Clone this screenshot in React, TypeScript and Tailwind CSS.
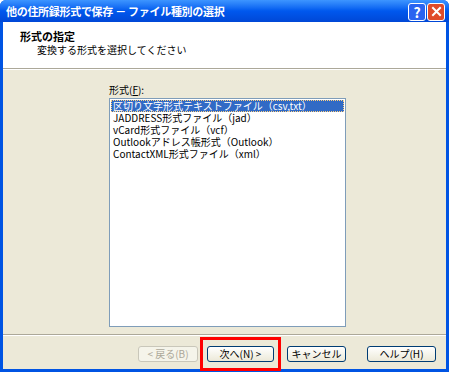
import React from 'react';

const formats = [
  '区切り文字形式テキストファイル（csv,txt）',
  'JADDRESS形式ファイル（jad）',
  'vCard形式ファイル（vcf）',
  'Outlookアドレス帳形式（Outlook）',
  'ContactXML形式ファイル（xml）',
];

const font = { fontFamily: '"MS UI Gothic", "Noto Sans CJK JP", sans-serif' };

function XpButton({ label, disabled }: { label: string; disabled?: boolean }) {
  return (
    <div
      className={`flex items-center justify-center h-[16px] rounded-[3px] border text-[10px] leading-none ${
        disabled
          ? 'border-[#c9c7ba] bg-[#f5f4ea] text-[#aca899]'
          : 'border-[#003c74] bg-gradient-to-b from-white to-[#ece9d8] text-black'
      }`}
    >
      {label}
    </div>
  );
}

export default function App() {
  return (
    <div className="w-[449px] h-[372px] bg-[#0054e3] flex flex-col rounded-t-[6px] overflow-hidden" style={font}>
      {/* Title bar */}
      <div className="h-[22px] flex items-center justify-between pl-[6px] pr-[4px] bg-gradient-to-b from-[#3d95ff] via-[#0058ee] to-[#0047d6]">
        <span className="text-white font-bold text-[11px] tracking-[-0.3px]">他の住所録形式で保存 － ファイル種別の選択</span>
        <div className="flex gap-[1px] pt-[1px]">
          <div className="w-[18px] h-[18px] rounded-[3px] border border-white bg-[#2a64f0] flex items-center justify-center text-white font-bold text-[14px] leading-none">?</div>
          <div className="w-[18px] h-[18px] rounded-[3px] border border-white bg-[#e04b2a] flex items-center justify-center">
            <svg width="11" height="11" viewBox="0 0 11 11">
              <path d="M2 2 L9 9 M9 2 L2 9" stroke="white" strokeWidth="2" strokeLinecap="square" />
            </svg>
          </div>
        </div>
      </div>

      {/* Client area */}
      <div className="flex-1 mx-[3px] mb-[3px] bg-[#ece9d8] flex flex-col">
        {/* Header */}
        <div className="h-[46px] bg-white pt-[7px] pl-[17px]">
          <div className="text-[11px] font-bold leading-[14px] text-black">形式の指定</div>
          <div className="text-[10px] leading-[13px] text-black pl-[17px]">変換する形式を選択してください</div>
        </div>
        <div className="border-t border-[#aca899] border-b border-b-white" />

        {/* Body */}
        <div className="flex-1 flex flex-col pl-[106px] pt-[13px]">
          <div className="text-[10px] leading-[13px] text-black mb-[2px]">
            形式(<span className="underline">F</span>):
          </div>
          <div className="w-[237px] h-[229px] bg-white border border-[#7f9db9] p-[1px]">
            {formats.map((f, i) => (
              <div
                key={f}
                className={`h-[12px] text-[10px] leading-[12px] pl-[2px] whitespace-nowrap ${
                  i === 0 ? 'bg-[#316ac5] text-white outline-1 outline-dotted outline-[#ffd080] -outline-offset-1' : 'text-black'
                }`}
              >
                {f}
              </div>
            ))}
          </div>
        </div>

        {/* Footer */}
        <div className="border-t border-[#aca899] border-b border-b-white mb-[2px]" />
        <div className="h-[31px] flex items-center pl-[135px]">
          <div className="w-[60px]">
            <XpButton label="< 戻る(B)" disabled />
          </div>
          <div className="ml-[2px] border-[3px] border-[#ff0000] px-[4px] py-[6px] w-[81px]">
            <XpButton label="次へ(N) >" />
          </div>
          <div className="ml-[6px] w-[59px]">
            <XpButton label="キャンセル" />
          </div>
          <div className="ml-[21px] w-[69px]">
            <XpButton label="ヘルプ(H)" />
          </div>
        </div>
      </div>
    </div>
  );
}
